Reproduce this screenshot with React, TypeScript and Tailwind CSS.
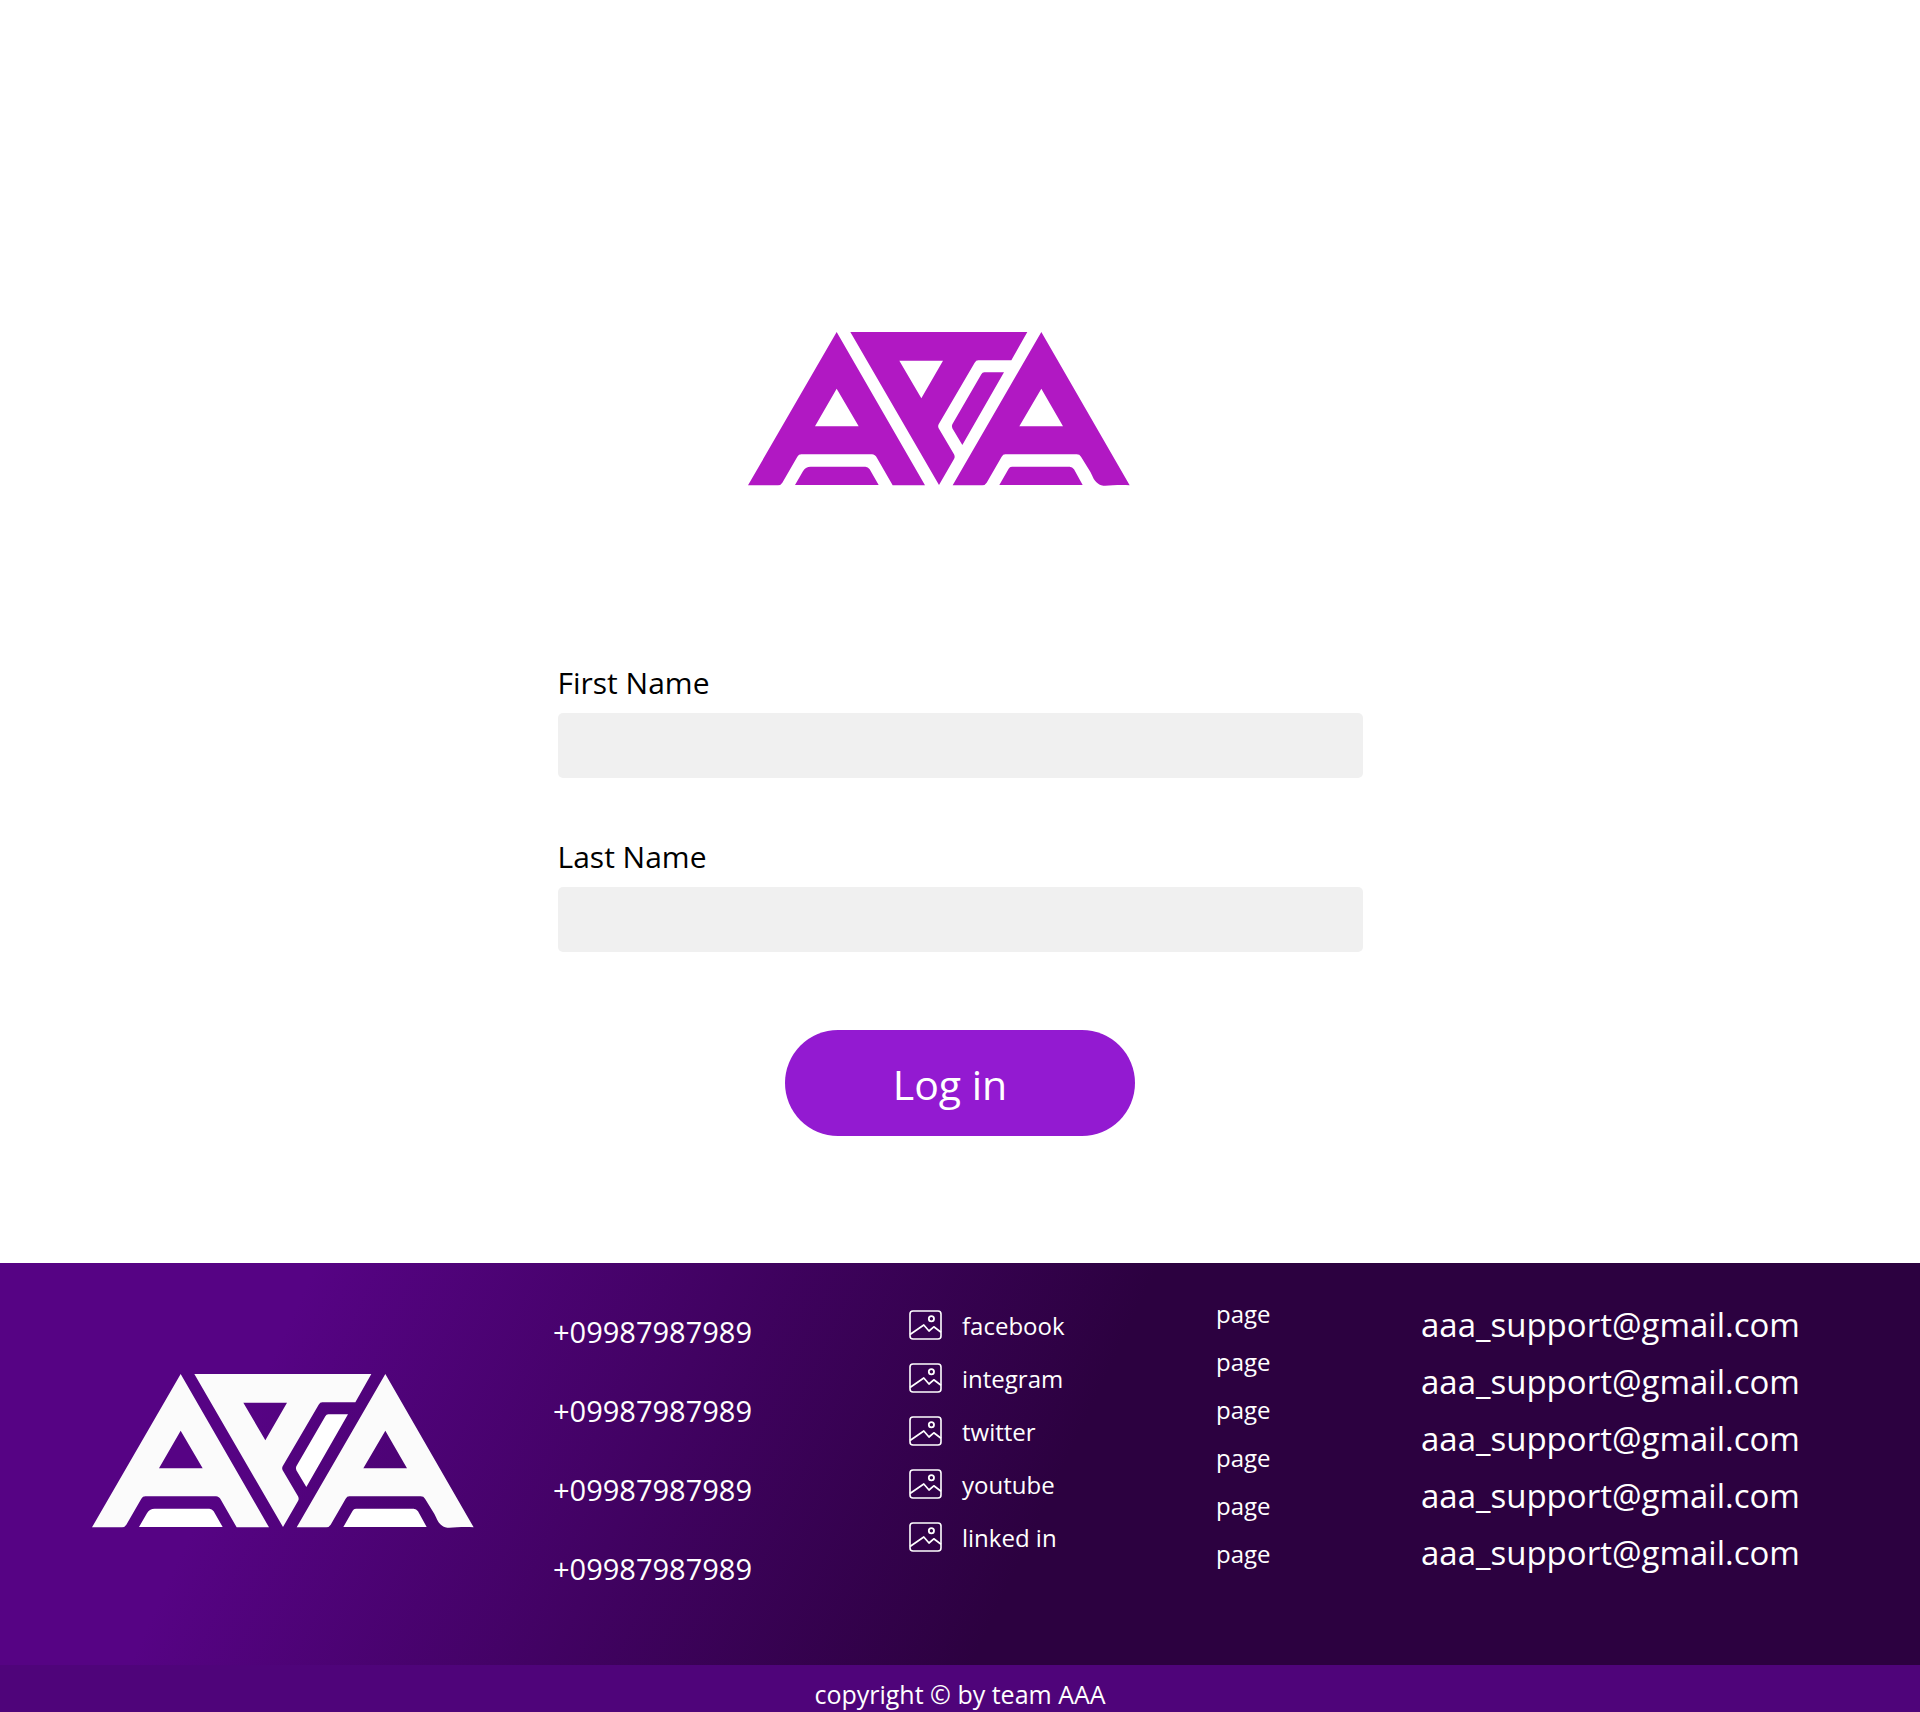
import React from "react";

const phones = ["+09987987989", "+09987987989", "+09987987989", "+09987987989"];
const socials = ["facebook", "integram", "twitter", "youtube", "linked in"];
const pages = ["page", "page", "page", "page", "page", "page"];
const emails = Array.from({ length: 5 }, () => "aaa_support@gmail.com");

function Logo({ className, accent }: { className: string; accent: string }) {
  return (
    <svg viewBox="54 66 1146 462" className={className} fill="currentColor" role="img" aria-label="AAA logo">
      <path
        fillRule="evenodd"
        d="M320 66 585 526H488L441 444Q435 433 426 433H214Q206 433 202 440L157 518Q152 526 144 526H54ZM320 236 255 349H386Z"
      />
      <path
        fillRule="evenodd"
        d="M361 66H892L844 151H745Q738 151 734 158L626 343Q623 349 626 355L672 433Q676 440 672 447L627 525ZM508 152 574 265 639 152Z"
      />
      <path
        fillRule="evenodd"
        d="M934 66 1199 526C1165 523 1140 528 1120 527C1102 525 1092 511 1086 496Q1082 486 1072 471L1053 440Q1049 433 1040 433H826Q819 433 815 440L770 518Q765 526 757 526H668ZM934 236 868 349H999Z"
      />
      <g className={accent}>
        <path d="M195 525 218 485Q226 470 242 470H406Q414 470 419 478L446 525Z" />
        <path d="M763 187H822L697 405 667 355Q664 349 667 343L754 193Q757 187 763 187Z" />
        <path d="M808 525 836 476Q839 470 846 470H1019Q1027 470 1032 478L1058 525Z" />
      </g>
    </svg>
  );
}

function PictureIcon() {
  return (
    <svg viewBox="0 0 33 30" className="h-[30px] w-[33px] shrink-0" fill="none" stroke="currentColor" aria-hidden="true">
      <rect x="1" y="1" width="31" height="28" rx="3" strokeWidth="1.6" />
      <circle cx="22.4" cy="8.7" r="2.6" strokeWidth="1.8" />
      <path d="M1 24.5 14.8 15l5.2 6 4.8-4.2 7.2 5.4" strokeWidth="1.7" strokeLinejoin="round" />
    </svg>
  );
}

function Field({ id, label }: { id: string; label: string }) {
  return (
    <div className="flex flex-col gap-[10px]">
      <label htmlFor={id} className="text-[30px] leading-10">
        {label}
      </label>
      <input id={id} type="text" className="h-[65px] w-full rounded-[5px] bg-[#f0f0f0] px-4 text-[30px] outline-none" />
    </div>
  );
}

export default function App() {
  return (
    <div className="bg-white font-['Segoe_UI','Open_Sans',sans-serif] text-black">
      <main className="flex flex-col items-center px-4 pt-[332px] pb-[127px]">
        <div className="pr-[42px]">
          <Logo className="h-[154px] w-[382px] text-[#b118c3]" accent="text-[#b118c3]" />
        </div>
        <form className="mt-[177px] flex w-full max-w-[805px] flex-col" onSubmit={(e) => e.preventDefault()}>
          <div className="flex flex-col gap-[59px]">
            <Field id="first-name" label="First Name" />
            <Field id="last-name" label="Last Name" />
          </div>
          <button type="submit" className="mt-[78px] h-[106px] w-[350px] self-center rounded-full bg-[#931ad1] pt-1 pr-5 text-[41px] text-white">
            Log in
          </button>
        </form>
      </main>

      <footer className="text-white">
        <div className="grid h-[402px] grid-cols-[553fr_356fr_307fr_205fr_499fr] items-start bg-[linear-gradient(115deg,#560384_15%,#2c0140_55%)]">
          <div className="pt-[111px] pl-[92px]">
            <Logo className="h-[154px] w-[382px] text-[#fbfbfb]" accent="text-white" />
          </div>
          <ul className="flex flex-col gap-[39px] pt-[49px] text-[29px] leading-10">
            {phones.map((phone, i) => (
              <li key={i}>
                <a href={`tel:${phone}`}>{phone}</a>
              </li>
            ))}
          </ul>
          <ul className="flex flex-col gap-[21px] pt-[47px] text-[24px] leading-8">
            {socials.map((name) => (
              <li key={name}>
                <a href="#" className="flex items-start gap-5">
                  <PictureIcon />
                  {name}
                </a>
              </li>
            ))}
          </ul>
          <ul className="flex flex-col gap-4 pt-[35px] text-[24px] leading-8">
            {pages.map((name, i) => (
              <li key={i}>
                <a href="#">{name}</a>
              </li>
            ))}
          </ul>
          <ul className="flex flex-col gap-[17px] pt-[42px] text-[33px] leading-10">
            {emails.map((email, i) => (
              <li key={i}>
                <a href={`mailto:${email}`}>{email}</a>
              </li>
            ))}
          </ul>
        </div>
        <p className="bg-[#4f047a] pt-[13px] pb-0.5 text-center text-[25px] leading-8">copyright © by team AAA</p>
      </footer>
    </div>
  );
}
